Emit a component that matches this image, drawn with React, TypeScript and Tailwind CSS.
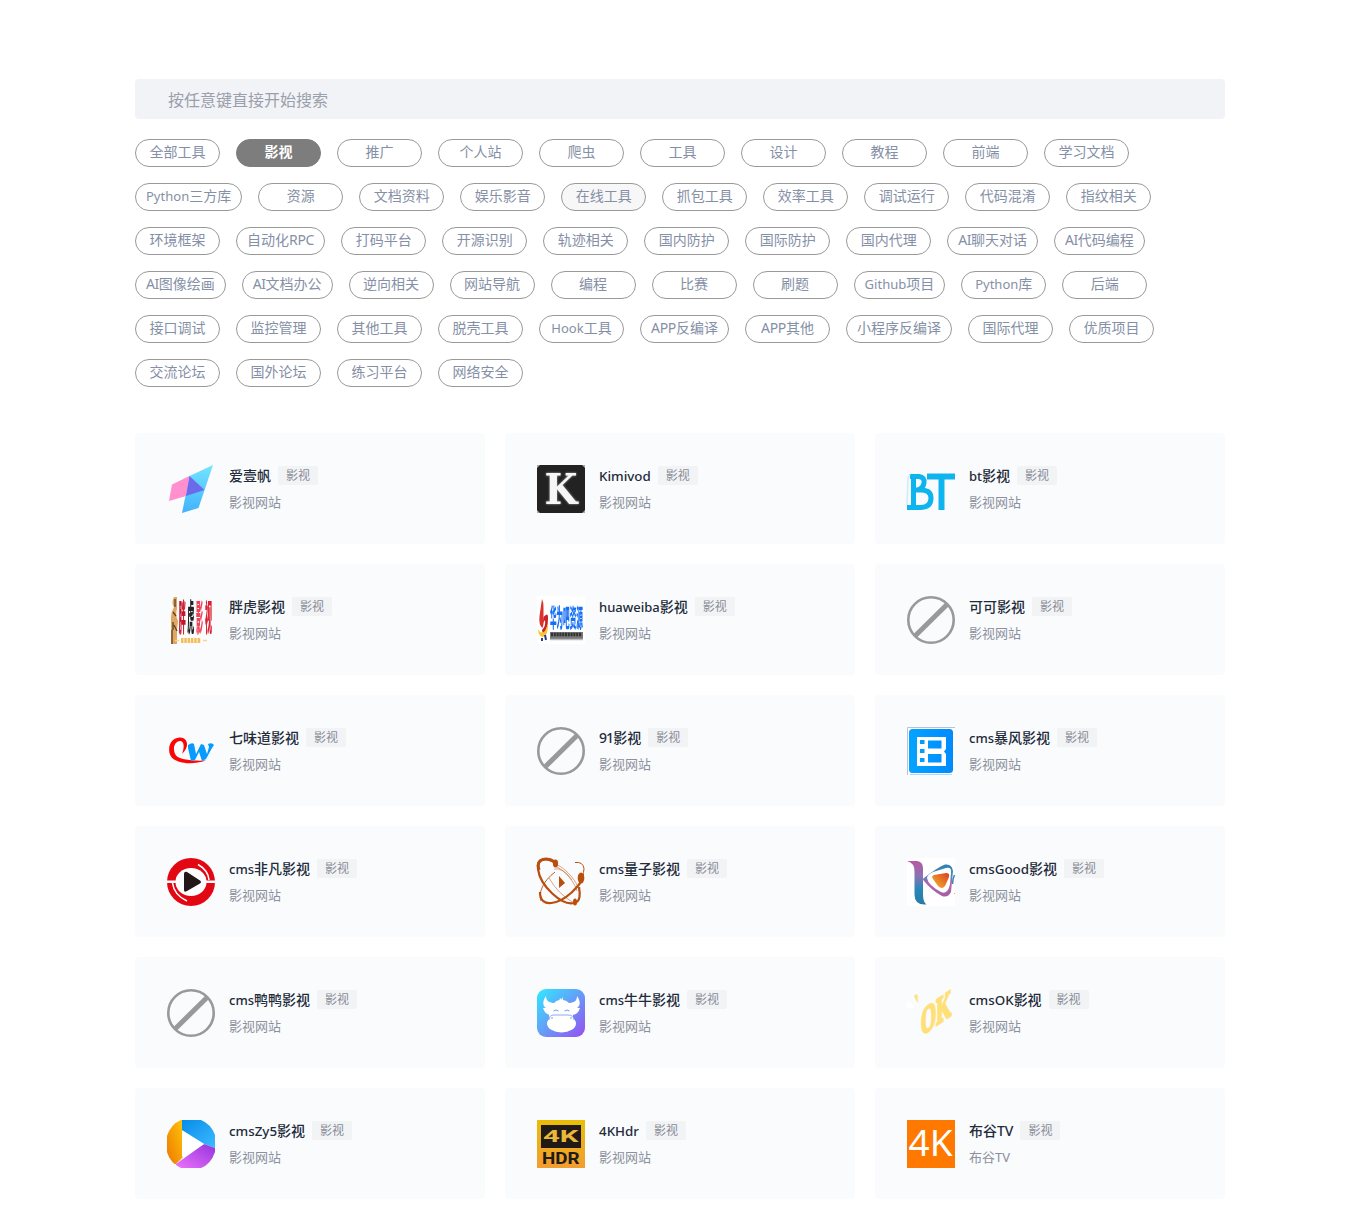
import React from "react";

const FONT = "font-['Noto_Sans','Noto_Sans_CJK_SC',sans-serif]";

const categories = [
  "全部工具", "影视", "推广", "个人站", "爬虫", "工具", "设计", "教程", "前端", "学习文档",
  "Python三方库", "资源", "文档资料", "娱乐影音", "在线工具", "抓包工具", "效率工具", "调试运行", "代码混淆", "指纹相关",
  "环境框架", "自动化RPC", "打码平台", "开源识别", "轨迹相关", "国内防护", "国际防护", "国内代理", "AI聊天对话", "AI代码编程",
  "AI图像绘画", "AI文档办公", "逆向相关", "网站导航", "编程", "比赛", "刷题", "Github项目", "Python库", "后端",
  "接口调试", "监控管理", "其他工具", "脱壳工具", "Hook工具", "APP反编译", "APP其他", "小程序反编译", "国际代理", "优质项目",
  "交流论坛", "国外论坛", "练习平台", "网络安全",
];

function latinStyle(run: string, title: boolean) {
  if (/^\d+$/.test(run)) return "tracking-[-0.9px]";
  if (run === "AI") return "tracking-[-0.45px]";
  if (run === "TV") return "";
  if (/^[A-Z]+$/.test(run)) return "tracking-[-0.3px]";
  if (title && /[A-Z]/.test(run)) return "text-[0.955em]";
  return "text-[0.93em]";
}

/** Fits Latin runs optically to the Chinese text around them. */
function Mixed({ text, title = false }: { text: string; title?: boolean }) {
  return (
    <>
      {text.split(/([A-Za-z0-9]+)/).filter(Boolean).map((part, i) =>
        /^[A-Za-z0-9]/.test(part) ? (
          <span key={i} className={latinStyle(part, title)}>{part}</span>
        ) : (
          <React.Fragment key={i}>{part}</React.Fragment>
        ),
      )}
    </>
  );
}

function Icon({ children }: { children: React.ReactNode }) {
  return (
    <svg viewBox="0 0 48 48" className="h-12 w-12 shrink-0 overflow-visible">
      {children}
    </svg>
  );
}

const Blocked = (
  <Icon>
    <circle cx="24" cy="24" r="22.7" fill="none" stroke="#999" strokeWidth="2.6" />
    <path d="M8.500 39.500 40 8.500" stroke="#999" strokeWidth="5" />
  </Icon>
);

const Sail = (
  <Icon>
    <defs>
      <linearGradient id="sail" x1="0" y1="0" x2="0" y2="1">
        <stop offset="0" stopColor="#73e4ff" />
        <stop offset="1" stopColor="#42b2fd" />
      </linearGradient>
    </defs>
    <path d="M46 0 22.500 11 15 48l16.500-5z" fill="url(#sail)" />
    <path d="M5 19.500 22.500 11 19 31 2 36z" fill="#ff8fcd" />
    <path d="M22.500 11 37.500 25 19 31z" fill="#6b6aeb" />
  </Icon>
);

const Kimivod = (
  <Icon>
    <defs>
      <filter id="glow"><feGaussianBlur stdDeviation="1.2" /></filter>
      <filter id="soften"><feGaussianBlur stdDeviation=".45" /></filter>
    </defs>
    <path d="M0 0h48v48H0z" fill="#222" />
    <path d="M0 0h3L0 3zM45 0h3v3zM0 45v3h3zM48 45v3h-3z" fill="#aaa" />
    <g fontFamily="DejaVu Serif" fontWeight="700" fontSize="42">
      <text x="7.500" y="39" textLength="33" lengthAdjust="spacingAndGlyphs" fill="#fff" filter="url(#glow)" opacity=".6">K</text>
      <text x="7.500" y="39" textLength="33" lengthAdjust="spacingAndGlyphs" fill="#f6f6f6" filter="url(#soften)">K</text>
    </g>
  </Icon>
);

const Bt = (
  <Icon>
    <g fill="none" stroke="#0eb4ed" strokeWidth="5" strokeLinejoin="round" filter="url(#soften)">
      <path d="M3 11.500h9q6 1 5 6.500T11 25H7M11 25q13-1 13 8 0 9-10 9.500H0M6.500 12v30" />
      <path d="M20 11.500h28M34.500 12v33" strokeWidth="6" />
    </g>
    <path d="M3 9 1 13 0 40" fill="none" stroke="#ccecfb" strokeWidth="1.500" />
  </Icon>
);

const Tiger = (
  <Icon>
    <g filter="url(#soften)">
      <path d="M7 1q-3 6 0 10-3 5-3 10v27h6V33l1-8q-3-6-1-12V1z" fill="#dfa75e" />
      <path d="M8 3v8M6 16l3 4M6 26v8M7 29l3 6M5 34v14" stroke="#59422c" strokeWidth="1.300" fill="none" />
      <g transform="scale(.44 2.250)" fontFamily="Noto Sans CJK SC" fontWeight="900" fontSize="16">
        <text x="26.500" y="15.500" fill="#c41628">胖</text>
        <text x="46" y="15.500" fill="#222">虎</text>
        <text x="66" y="15.500" fill="#ee4255">影</text>
        <text x="86.500" y="15.500" fill="#da2434">视</text>
      </g>
      <path d="M14 44.500h20" stroke="#f5bd56" strokeWidth="5" strokeDasharray="2.500 .8" />
      <path d="M8 44.500h4M36 44.500h4" stroke="#f8d392" strokeWidth="1.500" />
    </g>
  </Icon>
);

const Huaweiba = (
  <Icon>
    <path d="M0 0h48v48H0z" fill="#fff" />
    <g filter="url(#soften)">
      <path d="M5 3q2 4 1.500 9v16l-1 4q-4-3-3-12z" fill="#dc302d" />
      <path d="M6.500 21q5-6 4.500 2 0 10-5 15l-1-4q4-4 3-10l-2 3z" fill="#c9202c" />
      <path d="M1 33q3 6 7 2l3-7q0 13-6 13-4-2-4-8z" fill="#f7c52d" />
      <path d="M5 42v3M8 39l1 5" stroke="#293b8e" strokeWidth="2" />
      <g transform="scale(.55 1.750)">
        <text x="23.500" y="17.500" fontFamily="Noto Sans CJK SC" fontWeight="900" fontSize="14" textLength="60" lengthAdjust="spacingAndGlyphs" fill="#1970f5">华为吧资源</text>
      </g>
      <path d="M13 36h33v7H13z" fill="#777" />
      <path d="M14 38.500h31" stroke="#303030" strokeWidth="3.500" strokeDasharray="2 .8" />
      <path d="M13 43.500h33" stroke="#bbb" strokeWidth="1.500" />
    </g>
  </Icon>
);

const Qw = (
  <Icon>
    <path d="M15 27C23 20 21 10 12.500 10.500 4 11 1 19 2.500 26c2 10 20 13 36.500 7.500-10 .5-25 0-30-5-4-6-2-14 4-14.500 5 0 4 8 2 13z" fill="#fe0505" />
    <path d="M21 18q4-3 6-1l2 10 5-10 3 1 3 9 2-7-1-3q4-2 6 1l-2 3-6 11-4 2-3-9-4 8-4 1-3-13z" fill="#089bff" />
  </Icon>
);

const Baofeng = (
  <Icon>
    <defs>
      <linearGradient id="baofeng">
        <stop stopColor="#04a4ff" />
        <stop offset="1" stopColor="#008aff" />
      </linearGradient>
    </defs>
    <path d="M0 0h48v48H0z" fill="#fff" />
    <path d="M.5 48V.5H48" fill="none" stroke="#b5c5d5" />
    <path d="M3 47.500h42" stroke="#a9d9ff" />
    <rect x="2" y="2" width="44" height="44" rx="3.500" fill="url(#baofeng)" />
    <path fillRule="evenodd" d="M10 10h29v12l-2 2.500 2 2.500v12H10zM13 13v4h4.500v-4zM13 22v4h4.500v-4zM13 31v4h4.500v-4zM21 13.500v8h13.500v-8zM21 27v8.500h13.500V27z" fill="#fff" />
  </Icon>
);

const Feifan = (
  <Icon>
    <circle cx="24" cy="24" r="24" fill="#e30714" />
    <ellipse cx="24" cy="24" rx="15.500" ry="14" fill="#fff" />
    <path d="M0 22.500h13v2.500H0zM35 22.500h13v2.500H35z" fill="#fff" />
    <path d="M31 6.500Q41 12 42 22M5.500 25Q7 37 20 43" fill="none" stroke="#fff" strokeWidth="1.500" />
    <path d="M17 16v16q0 3 3 1l13-7.500q2-1.500 0-3L20 14q-3-1-3 2z" fill="#231815" />
  </Icon>
);

const Atom = (
  <Icon>
    <g fill="none" stroke="#b94e0e">
      <path d="M18 5C9-2-1 1 1 11c2 17 24 37 36 34 7-1 6-10 5-16" strokeWidth="2.200" />
      <path d="M2 12C-2 0 10-1 18 4" strokeWidth="3" />
      <path d="M19 6c12 6 21 18 23 26M18 8c11 5 20 17 22 25M12 20q9 16 25 25" strokeWidth=".5" />
      <path d="M18 14C6 23 1 35 4 43" strokeWidth=".9" />
      <path d="M38 4.500q8-1 9 6 0 4-2 8" strokeWidth="1" />
      <path d="M3 34c0 18 20 11 31 1C41 28 45 25 46 16" strokeWidth="2.200" />
      <path d="M17 11q9-2 18 11" strokeWidth=".5" />
    </g>
    <g fill="#b94e0e">
      <ellipse cx="18.500" cy="5.500" rx="2.600" ry="4" />
      <ellipse cx="44" cy="20" rx="3.300" ry="5.500" />
      <ellipse cx="38" cy="44" rx="2" ry="3.500" />
      <path d="M22 18v12l6-5z" />
    </g>
  </Icon>
);

const Good = (
  <Icon>
    <defs>
      <linearGradient id="stem" x1="0" y1="0" x2="0" y2="1">
        <stop stopColor="#b958a0" />
        <stop offset=".35" stopColor="#8a73b3" />
        <stop offset=".65" stopColor="#2689b8" />
        <stop offset="1" stopColor="#2a79a6" />
      </linearGradient>
      <linearGradient id="loop" x1="0" y1="0" x2="0" y2="1">
        <stop stopColor="#3180b4" />
        <stop offset=".3" stopColor="#408bb9" />
        <stop offset=".6" stopColor="#b366ab" />
        <stop offset="1" stopColor="#a35ea7" />
      </linearGradient>
      <linearGradient id="core" x1="1" y1="0" x2="0" y2="1">
        <stop stopColor="#da3e24" />
        <stop offset="1" stopColor="#f5ba2b" />
      </linearGradient>
    </defs>
    <path d="M0 0h48v48H0z" fill="#fff" />
    <path d="M0 3h10q6 1 6 7v26q0 8 3.500 10.500-12 1-12-10V14Q8 5 0 3z" fill="url(#stem)" />
    <path d="M17 20Q31 9 38 6.500q7-1 8 6.500l-2 21q-3 6-9 4-11-6-18-15-2-2 0-3z" fill="url(#loop)" />
    <path d="M20 20q0-3 6-6l13-4q6-1 5 5l-1 11q-2 11-9 8Q21 27 20 20z" fill="#fff" />
    <path d="M27 17l12-2q4 0 3 4l-4 9q-3 4-7 0l-5-7q-2-3 1-4z" fill="url(#core)" />
    <path d="M47.500 17q-2 4-2 9" fill="none" stroke="#3687b8" strokeWidth="1.500" />
    <path d="M48 35.500h-1" stroke="#f3a35d" />
  </Icon>
);

const Cow = (
  <Icon>
    <defs>
      <linearGradient id="cow" x1="0" y1="0" x2="1" y2="1">
        <stop stopColor="#30eaff" />
        <stop offset=".5" stopColor="#659df8" />
        <stop offset="1" stopColor="#974df0" />
      </linearGradient>
    </defs>
    <rect width="48" height="48" rx="9" fill="url(#cow)" />
    <g fill="#fff">
      <path d="M9 7c-5 7-3 13 5 13l4-6c-6 0-9-2-9-7zM40 7c5 7 3 13-5 13l-4-6c6 0 9-2 9-7z" />
      <path d="M6 19q5-1 8 1v6q-6 0-8-7zM43 19q-5-1-8 1v6q6 0 8-7z" />
      <path d="M17 14q3-3 5.500-3l.5-2 1.500 1.500L26 8v3q3 0 6 3l4 5v11H12V19z" />
      <ellipse cx="24.500" cy="34.500" rx="14.500" ry="9" />
    </g>
    <path d="M12 31q0-5 5-5h14q6 0 6 5" stroke="#8ba9fa" fill="none" />
    <path d="M16.500 22q2.500-2 5 0M27.500 22q2.500-2 5 0M15 30v-2M34 30v-2" stroke="#6b9ff9" fill="none" />
  </Icon>
);

const Ok = (
  <Icon>
    <path d="M7 7q2-3 3.500-1l.5 8q-2-2-4-7z" fill="#ffe27c" />
    <path d="M0 11l9 8H0z" fill="#fff" />
    <text
      transform="matrix(.82 -.57 0 1 14 47)"
      fontFamily="Liberation Serif"
      fontWeight="700"
      fontSize="38"
      textLength="37"
      lengthAdjust="spacingAndGlyphs"
      fill="#ffe077"
      stroke="#ffe077"
      strokeWidth="2.600"
    >
      OK
    </text>
  </Icon>
);

const Zy5 = (
  <Icon>
    <defs>
      <clipPath id="disc"><path d="M14 0h20q10 4 14 15v17q-4 12-14 16H14Q3 43 0 32V16Q4 4 14 0z" /></clipPath>
      <linearGradient id="gold" x1="0" y1="1" x2="1" y2="0">
        <stop stopColor="#ed7800" />
        <stop offset="1" stopColor="#ffc60a" />
      </linearGradient>
      <linearGradient id="azure" x1="0" y1="0" x2="1" y2="1">
        <stop stopColor="#078ce8" />
        <stop offset="1" stopColor="#3dbaff" />
      </linearGradient>
      <linearGradient id="violet" x1="0" y1="1" x2="1" y2="0">
        <stop stopColor="#ed72fa" />
        <stop offset="1" stopColor="#9334dd" />
      </linearGradient>
    </defs>
    <g clipPath="url(#disc)">
      <path d="M0 0h16v37L9 44H0z" fill="url(#gold)" />
      <path d="M15 0h33v28L37 24 15 10z" fill="url(#azure)" />
      <path d="M9 44 37 24l11 4v20H9z" fill="url(#violet)" />
      <path d="M15 10.500 37 24 15 37z" fill="#fff" />
    </g>
  </Icon>
);

const Hdr = (
  <Icon>
    <defs>
      <linearGradient id="hdr" x1="0" y1="0" x2="0" y2="1">
        <stop stopColor="#e9bd08" />
        <stop offset="1" stopColor="#f29d31" />
      </linearGradient>
    </defs>
    <path d="M0 0h48v48H0z" fill="url(#hdr)" />
    <path d="M4 5h40v23H4z" fill="#211a17" />
    <g fontFamily="Roboto" fontWeight="700">
      <text x="6" y="22" fontSize="16" fill="#e8b83b" textLength="35.500" lengthAdjust="spacingAndGlyphs">4K</text>
      <text x="5" y="43.500" fontSize="16" fill="#211a17" textLength="37.500" lengthAdjust="spacingAndGlyphs">HDR</text>
    </g>
  </Icon>
);

const FourK = (
  <Icon>
    <path d="M0 0h48v48H0z" fill="#ff7800" />
    <text x="1.500" y="35.500" fontFamily="Noto Sans" fontSize="37" fill="#fff" textLength="44" lengthAdjust="spacingAndGlyphs">4K</text>
  </Icon>
);

const sites: { name: string; icon: React.ReactNode; desc?: string }[] = [
  { name: "爱壹帆", icon: Sail },
  { name: "Kimivod", icon: Kimivod },
  { name: "bt影视", icon: Bt },
  { name: "胖虎影视", icon: Tiger },
  { name: "huaweiba影视", icon: Huaweiba },
  { name: "可可影视", icon: Blocked },
  { name: "七味道影视", icon: Qw },
  { name: "91影视", icon: Blocked },
  { name: "cms暴风影视", icon: Baofeng },
  { name: "cms非凡影视", icon: Feifan },
  { name: "cms量子影视", icon: Atom },
  { name: "cmsGood影视", icon: Good },
  { name: "cms鸭鸭影视", icon: Blocked },
  { name: "cms牛牛影视", icon: Cow },
  { name: "cmsOK影视", icon: Ok },
  { name: "cmsZy5影视", icon: Zy5 },
  { name: "4KHdr", icon: Hdr },
  { name: "布谷TV", icon: FourK, desc: "布谷TV" },
];

function pillStyle(name: string) {
  if (name === "影视") return "border-[#7d7d7d] bg-[#7d7d7d] font-bold text-white";
  if (name === "在线工具") return "border-[#999] bg-[#f7f7f8] text-[#8590a6]";
  return "border-[#999] bg-white text-[#8590a6]";
}

export default function App() {
  return (
    <main className={`min-h-[1219px] bg-white pt-[79px] pl-[135px] ${FONT}`}>
      <div className="w-[1090px]">
        <input
          className="block h-10 w-full rounded bg-[#f1f3f7] px-[33px] pt-0.5 text-base text-gray-700 outline-none placeholder:text-[#9a9fab]"
          placeholder="按任意键直接开始搜索"
        />
        <nav className="mt-5 flex flex-wrap gap-4">
          {categories.map((name) => (
            <button
              key={name}
              className={`flex h-7 min-w-[85px] items-center justify-center rounded-full border px-2.5 pb-0.5 text-sm leading-6 whitespace-nowrap ${pillStyle(name)}`}
            >
              <span><Mixed text={name} /></span>
            </button>
          ))}
        </nav>
        <section className="mt-[46px] grid grid-cols-3 gap-5">
          {sites.map(({ name, icon, desc }) => (
            <article key={name} className="flex h-[111px] gap-3.5 rounded bg-[#fafbfd] p-8">
              {icon}
              <div>
                <div className="flex h-[21px] items-center gap-[7px]">
                  <h2 className="text-sm leading-5 font-medium text-[#222b3a]"><Mixed text={name} title /></h2>
                  <span className="flex h-[19px] w-10 items-center justify-center rounded-xs bg-[#f2f3f5] text-xs text-[#888c98]">影视</span>
                </div>
                <p className="mt-1.5 text-[13px] leading-5 text-[#8a909c]"><Mixed text={desc ?? "影视网站"} /></p>
              </div>
            </article>
          ))}
        </section>
      </div>
    </main>
  );
}
